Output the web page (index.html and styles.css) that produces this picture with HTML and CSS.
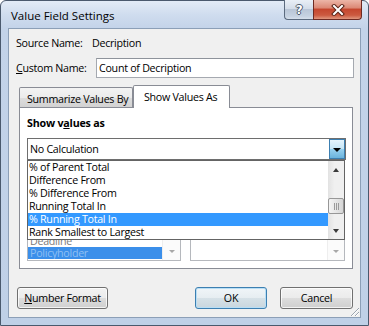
FILE: index.html
```html
<!DOCTYPE html>
<html>
<head>
<meta charset="utf-8">
<link rel="stylesheet" href="styles.css">
</head>
<body>
<div class="window">
  <div class="titlebar">
    <div class="title">Value Field Settings</div>
    <div class="caption">
      <div class="cbtn help"><span class="q">?</span></div>
      <div class="cbtn close">
        <svg width="14" height="12" viewBox="0 0 14 12">
          <path d="M3 2 L11 10 M11 2 L3 10" stroke="#5a2418" stroke-width="4" stroke-linecap="square" fill="none"/>
          <path d="M3 2 L11 10 M11 2 L3 10" stroke="#ffffff" stroke-width="2" stroke-linecap="square" fill="none"/>
        </svg>
      </div>
    </div>
  </div>
  <div class="client">
    <div class="row source"><span class="lbl lbl-src">Source Name:</span><span>Decription</span></div>
    <div class="row custom"><span class="lbl lbl-cust"><u>C</u>ustom Name:</span><div class="input">Count of Decription</div></div>
    <div class="tabs">
      <div class="tab">Summarize Values By</div>
      <div class="tab active">Show Values As</div>
    </div>
    <div class="panel">
      <div class="heading">Show v<u>a</u>lues as</div>
      <div class="combo-wrap">
        <div class="combo">
          <span class="combo-text">No Calculation</span>
          <div class="ddbtn"><span class="tri-down"></span></div>
        </div>
        <div class="base-row">
          <div class="base-col left">
            <div class="base-lbl"></div>
            <div class="listbox">
              <div class="lb-items">
                <div class="lb-item">Deadline</div>
                <div class="lb-item sel">Policyholder</div>
              </div>
              <div class="lb-scroll"><span class="tri-small"></span></div>
            </div>
          </div>
          <div class="base-col right">
            <div class="base-lbl"></div>
            <div class="listbox">
              <div class="lb-items"></div>
              <div class="lb-scroll"><span class="tri-small"></span></div>
            </div>
          </div>
        </div>
        <div class="droplist">
          <div class="dl-items">
            <div class="dl-item">% of Parent Total</div>
            <div class="dl-item">Difference From</div>
            <div class="dl-item">% Difference From</div>
            <div class="dl-item">Running Total In</div>
            <div class="dl-item sel">% Running Total In</div>
            <div class="dl-item">Rank Smallest to Largest</div>
          </div>
          <div class="sb">
            <div class="sb-btn"><span class="tri-up"></span></div>
            <div class="sb-track"><div class="sb-thumb"><span></span><span></span><span></span></div></div>
            <div class="sb-btn"><span class="tri-down2"></span></div>
          </div>
        </div>
      </div>
    </div>
    <div class="buttons">
      <div class="btn numfmt"><u>N</u>umber Format</div>
      <div class="btn ok">OK</div>
      <div class="btn cancel">Cancel</div>
    </div>
    <svg class="grip" width="12" height="12" viewBox="0 0 12 12">
      <path d="M11 3 L3 11 M11 7 L7 11" stroke="#9aa3ae" stroke-width="1" fill="none"/>
      <path d="M11 4 L4 11 M11 8 L8 11" stroke="#ffffff" stroke-width="1" fill="none"/>
    </svg>
  </div>
</div>
</body>
</html>
```

FILE: styles.css
```css
* { box-sizing: border-box; }
html, body { margin: 0; padding: 0; }
body {
  width: 369px;
  height: 326px;
  overflow: hidden;
  background: #ffffff;
  font-family: "Open Sans", "Noto Sans", sans-serif;
  font-size: 10.7px;
  letter-spacing: -0.28px;
  color: #000;
}
u { text-decoration: underline; text-underline-offset: 1px; }

.window {
  width: 369px;
  height: 326px;
  border: 1px solid #4a596d;
  border-radius: 6px 6px 0 0;
  background: linear-gradient(180deg, #e2ebf6 0%, #cfdcee 14px, #c3d3e9 28px, #bfd0e7 100%);
  display: flex;
  flex-direction: column;
}

.titlebar {
  height: 27px;
  display: flex;
  align-items: flex-start;
  flex: none;
}
.title {
  flex: 1;
  padding: 7px 0 0 10px;
  font-size: 11.5px;
  letter-spacing: 0;
  line-height: 15px;
}
.caption {
  display: flex;
  margin: -1px 6px 0 0;
}
.cbtn {
  height: 20px;
  display: flex;
  align-items: center;
  justify-content: center;
  border: 1px solid #5b6a7e;
  border-top: none;
}
.help {
  width: 29px;
  border-right: none;
  border-radius: 0 0 0 4px;
  background: linear-gradient(180deg, #e9eff6 0%, #d4dde9 45%, #b9c6d7 50%, #c6d2e1 85%, #d6e0ec 100%);
}
.help .q {
  font-family: "DejaVu Sans", sans-serif;
  font-weight: bold;
  font-size: 12px;
  line-height: 12px;
  color: #ffffff;
  text-shadow: 1px 0 0 #4b5a6d, -1px 0 0 #4b5a6d, 0 1px 0 #4b5a6d, 0 -1px 0 #4b5a6d;
}
.close {
  width: 49px;
  border-color: #6e2a22;
  border-radius: 0 0 4px 0;
  background: linear-gradient(180deg, #ecb6a8 0%, #dc8a77 40%, #c5472f 50%, #cc5a40 80%, #e0977f 100%);
}

.client {
  position: relative;
  height: 290px;
  margin: 0 7px;
  border: 1px solid #8c9fb7;
  background: #f0f0f0;
  display: flex;
  flex-direction: column;
  padding: 7px 0 8px 0;
  flex: none;
}

.row { display: flex; align-items: center; }
.source { height: 15px; line-height: 15px; padding-left: 7px; }
.lbl-src { width: 76px; }
.custom { margin-top: 7px; height: 20px; }
.lbl-cust { width: 87px; padding-left: 7px; }
.input {
  flex: 1;
  height: 20px;
  margin-right: 6px;
  border: 1px solid #a5a9b0;
  border-top-color: #8e939b;
  background: #fff;
  padding-left: 2px;
  line-height: 18px;
}

.tabs {
  margin: 7px 0 0 10px;
  height: 22px;
  display: flex;
  align-items: flex-end;
  position: relative;
  z-index: 1;
}
.tab {
  border: 1px solid #898c95;
  border-bottom: none;
  line-height: 15px;
}
.tab:not(.active) {
  width: 114px;
  height: 20px;
  padding: 4px 0 0 7px;
  background: linear-gradient(180deg, #f3f3f3 0%, #ebebeb 50%, #dddddd 51%, #d2d2d2 100%);
  border-radius: 2px 2px 0 0;
}
.tab.active {
  width: 97px;
  height: 23px;
  margin-bottom: -1px;
  padding: 4px 0 0 10px;
  background: #ffffff;
  border-radius: 2px 2px 0 0;
}

.panel {
  margin: 0 7px 0 10px;
  height: 162px;
  border: 1px solid #898c95;
  background: #ffffff;
  padding: 8px 6px 7px 7px;
  flex: none;
}
.heading {
  font-weight: bold;
  height: 15px;
  line-height: 15px;
  letter-spacing: -0.2px;
}
.combo-wrap {
  position: relative;
  margin-top: 7px;
}
.combo {
  height: 22px;
  border: 1px solid #6e6e6e;
  background: #fff;
  display: flex;
  align-items: center;
}
.combo-text { flex: 1; padding-left: 2px; line-height: 15px; }
.ddbtn {
  width: 16px;
  height: 20px;
  border: 1px solid #3c7fb1;
  background: linear-gradient(180deg, #e5f4fc 0%, #c4e5f6 50%, #98d1ef 51%, #6ab3dc 100%);
  display: flex;
  align-items: center;
  justify-content: center;
}
.tri-down {
  width: 0; height: 0;
  border-left: 4px solid transparent;
  border-right: 4px solid transparent;
  border-top: 4px solid #000;
  margin-top: 1px;
}

.base-row {
  display: flex;
  gap: 9px;
  margin-top: 8px;
}
.base-col.left { width: 154px; }
.base-col.right { width: 155px; }
.base-lbl { height: 15px; }
.listbox {
  height: 78px;
  border: 1px solid #b5b8bd;
  background: #fff;
  display: flex;
  overflow: hidden;
}
.lb-items {
  flex: 1;
  display: flex;
  flex-direction: column;
  justify-content: flex-end;
  padding-bottom: 1px;
}
.lb-item { height: 12px; line-height: 12px; padding-left: 2px; color: #7a7a7a; white-space: nowrap; overflow: hidden; }
.lb-item.sel { background: #3b8fea; color: #8fbff2; }
.lb-scroll {
  width: 18px;
  background: #fbfbfb;
  border-left: 1px solid #eeeeee;
  display: flex;
  align-items: flex-end;
  justify-content: center;
  padding-bottom: 7px;
}
.right .lb-scroll { width: 17px; }
.tri-small {
  width: 0; height: 0;
  border-left: 3px solid transparent;
  border-right: 3px solid transparent;
  border-top: 3px solid #a8a8a8;
}

.droplist {
  position: absolute;
  top: 22px;
  left: 0;
  width: 318px;
  height: 80px;
  border: 1px solid #646464;
  background: #fff;
  display: flex;
  z-index: 2;
}
.dl-items { flex: 1; }
.dl-item {
  height: 13px;
  line-height: 13px;
  padding-left: 1px;
  white-space: nowrap;
}
.dl-item.sel { background: #3399ff; color: #ffffff; }
.sb {
  width: 16px;
  display: flex;
  flex-direction: column;
  background: linear-gradient(90deg, #e2e2e2 0%, #f0f0f0 40%, #f0f0f0 100%);
}
.sb-btn {
  height: 17px;
  display: flex;
  align-items: center;
  justify-content: center;
}
.tri-up {
  width: 0; height: 0;
  border-left: 3px solid transparent;
  border-right: 3px solid transparent;
  border-bottom: 4px solid #3a3a3a;
}
.tri-down2 {
  width: 0; height: 0;
  border-left: 3px solid transparent;
  border-right: 3px solid transparent;
  border-top: 4px solid #3a3a3a;
}
.sb-track { flex: 1; }
.sb-thumb {
  margin-top: 20px;
  height: 16px;
  border: 1px solid #979797;
  border-radius: 2px;
  background: linear-gradient(90deg, #f4f4f4 0%, #e6e6e6 50%, #d6d6d6 100%);
  display: flex;
  justify-content: center;
  align-items: center;
  gap: 1px;
}
.sb-thumb span { width: 1px; height: 7px; background: #9a9a9a; }

.buttons {
  margin-top: 18px;
  height: 22px;
  display: flex;
  padding: 0 7px 0 8px;
}
.btn {
  height: 22px;
  border: 1px solid #707070;
  border-radius: 3px;
  background: linear-gradient(180deg, #f2f2f2 0%, #ebebeb 50%, #dddddd 51%, #cfcfcf 100%);
  box-shadow: inset 0 0 0 1px rgba(255,255,255,0.75);
  display: flex;
  align-items: center;
  justify-content: center;
  line-height: 15px;
}
.numfmt { width: 91px; }
.ok {
  width: 72px;
  margin-left: auto;
  border-color: #3c7fb1;
  box-shadow: inset 0 0 0 1px #b8def5;
  background: linear-gradient(180deg, #f0f5f8 0%, #e6edf1 50%, #d6e1e7 51%, #c9d6de 100%);
}
.cancel { width: 73px; margin-left: 13px; }

.grip {
  position: absolute;
  right: 0;
  bottom: 0;
}
```
